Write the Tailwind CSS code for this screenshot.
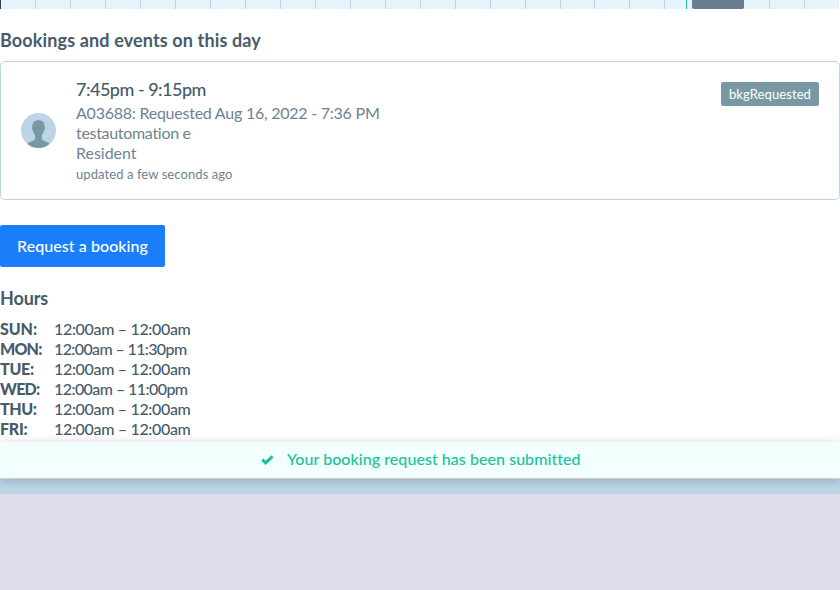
<!DOCTYPE html>
<html lang="en">
<head>
<meta charset="utf-8">
<title>Bookings</title>
<script src="https://cdn.jsdelivr.net/npm/@tailwindcss/browser@4"></script>
</head>
<body class="h-[590px] overflow-hidden bg-[#dddde9] font-['Lato','Open_Sans',sans-serif] text-[16px] leading-5 text-[#475b6b]">
<main class="flex h-[494px] flex-col overflow-hidden border-b-[15px] border-[#bdd3e8] bg-white">
  <div class="relative h-[9px] w-[839.3px] shrink-0 bg-[#e8f4fb]">
    <div id="slots" class="flex h-full"></div>
    <div class="absolute left-0 top-0 h-full w-px bg-[#2f3e4c]"></div>
    <div class="absolute left-[686px] top-0 h-full w-px bg-[#19c29b]"></div>
    <div class="absolute left-[692px] top-0 h-full w-[52px] rounded-b-[2px] bg-[#6a7d90]"></div>
  </div>
  <h2 class="mt-[19px] h-[25px] shrink-0 text-[18px] leading-6 font-bold"><span data-w="261">Bookings and events on this day</span></h2>
  <section class="mt-2 flex h-[139px] shrink-0 rounded-[5px] border border-[#bdd3e8] pl-5">
    <svg class="mt-[51px] size-[35px] shrink-0" viewBox="0 0 35 35">
      <defs><clipPath id="disc"><circle cx="17.5" cy="17.5" r="17.5"/></clipPath></defs>
      <circle cx="17.5" cy="17.5" r="17.5" fill="#bdd3e8"/>
      <path clip-path="url(#disc)" fill="#7899a3" d="M17.5 7.2c-4.300-.1-6.300 2.300-6.100 6.600-.9.100-.5 2.900.6 3.700.4 2.200 1.200 3.500 2.200 4.700v3.700c-.4 2.100-6.800 2.500-8.700 5.700V36h24v-4.400c-1.900-3.200-8.300-3.600-8.700-5.700v-3.700c1-1.200 1.800-2.500 2.200-4.700 1.100-.8 1.500-3.600.6-3.700.2-4.300-1.800-6.700-6.100-6.600z"/>
    </svg>
    <div class="ml-5 flex-1 pt-[15px] text-[#6d8293]">
      <p class="h-[26px] text-[18px] leading-6 text-[#475b6b] font-medium"><span data-w="130">7:45pm - 9:15pm</span></p>
      <p><span data-w="303.500">A03688: Requested Aug 16, 2022 - 7:36 PM</span></p>
      <p><span data-w="115">testautomation e</span></p>
      <p><span data-w="60.500">Resident</span></p>
      <p class="pt-px text-[13px] leading-5"><span data-w="156.500">updated a few seconds ago</span></p>
    </div>
    <div class="mt-5 mr-5 flex h-6 w-[98px] justify-center rounded-[2px] bg-[#7899a3] text-[13px] leading-6 text-white"><span data-w="82">bkgRequested</span></div>
  </section>
  <button class="mt-[25px] h-[42px] w-[165px] shrink-0 rounded-[2px] bg-[#1a7efb] pb-px font-medium text-white"><span data-w="131">Request a booking</span></button>
  <h2 class="mt-[19px] h-6 shrink-0 text-[18px] leading-6 font-bold"><span data-w="48">Hours</span></h2>
  <dl class="mt-[9px] grid grid-cols-[54px_1fr] auto-rows-[20px]">
    <dt class="font-black"><span data-w="37">SUN:</span></dt><dd class="font-medium"><span data-w="136.500">12:00am – 12:00am</span></dd>
    <dt class="font-black"><span data-w="41.500">MON:</span></dt><dd class="font-medium"><span data-w="132.500">12:00am – 11:30pm</span></dd>
    <dt class="font-black"><span data-w="34">TUE:</span></dt><dd class="font-medium"><span data-w="136.500">12:00am – 12:00am</span></dd>
    <dt class="font-black"><span data-w="39.500">WED:</span></dt><dd class="font-medium"><span data-w="133.500">12:00am – 11:00pm</span></dd>
    <dt class="font-black"><span data-w="36.500">THU:</span></dt><dd class="font-medium"><span data-w="136.500">12:00am – 12:00am</span></dd>
    <dt class="font-black"><span data-w="27.500">FRI:</span></dt><dd class="font-medium"><span data-w="136.500">12:00am – 12:00am</span></dd>
  </dl>
</main>
<div role="status" class="absolute inset-x-0 top-[442px] flex h-9 items-center bg-[#f2fffd] pl-[261px] font-medium text-[#19c29b] shadow-[0_1px_0_#cbd0cf,0_2px_10px_rgba(0,0,0,0.22)]">
  <svg class="mr-[13px] h-[10px] w-[13px]" viewBox="0 0 13 10"><path d="M1.300 4.700 4.600 7.900 11.500 1.400" fill="none" stroke="currentColor" stroke-width="3"/></svg>
  <span class="-mt-0.5" data-w="293">Your booking request has been submitted</span>
</div>
<script>
  // One cell per hour of the day
  const slots = document.getElementById('slots');
  for (let hour = 0; hour < 24; hour++) {
    const cell = document.createElement('div');
    cell.className = 'flex-1 border-l border-[#bdd3e8]';
    slots.append(cell);
  }
  // Track each label so that it fills its intended width
  function track() {
    document.querySelectorAll('[data-w]').forEach(el => {
      el.style.whiteSpace = 'nowrap';
      el.style.letterSpacing = '0px';
      const delta = Number(el.dataset.w) - el.getBoundingClientRect().width;
      el.style.letterSpacing = (delta / el.textContent.length) + 'px';
    });
  }
  window.addEventListener('load', () => {
    track();
    document.fonts.ready.then(track);
    requestAnimationFrame(track);
    setTimeout(track, 50);
  });
</script>
</body>
</html>
